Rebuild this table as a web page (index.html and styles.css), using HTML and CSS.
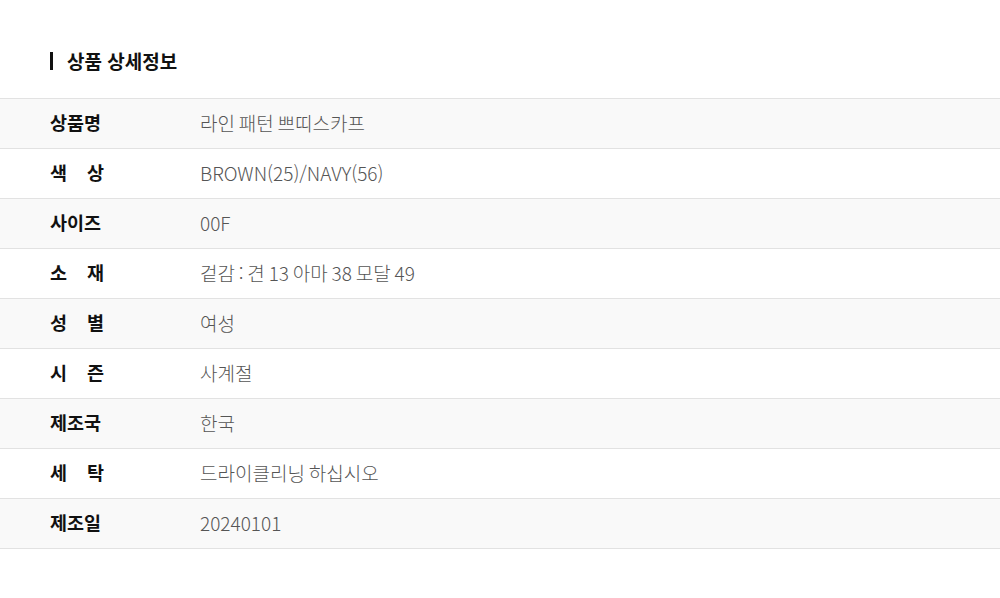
FILE: index.html
```html
<!DOCTYPE html>
<html lang="ko">
<head>
    <meta charset="UTF-8">
    <meta name="viewport" content="width=device-width, initial-scale=1.0">
    <title>상품 상세정보</title>
    <link rel="stylesheet" href="styles.css">
</head>
<body>

    <div class="info">
        <h3 class="info-title">상품 상세정보</h3>
        <table class="info-table">
            <tr>
                <th><span class="label">상품명</span></th>
                <td>라인 패턴 쁘띠스카프</td>
            </tr>
            <tr>
                <th><span class="label"><i>색</i><i>상</i></span></th>
                <td>BROWN(25)/NAVY(56)</td>
            </tr>
            <tr>
                <th><span class="label">사이즈</span></th>
                <td>00F</td>
            </tr>
            <tr>
                <th><span class="label"><i>소</i><i>재</i></span></th>
                <td>겉감 : 견 13 아마 38 모달 49</td>
            </tr>
            <tr>
                <th><span class="label"><i>성</i><i>별</i></span></th>
                <td>여성</td>
            </tr>
            <tr>
                <th><span class="label"><i>시</i><i>즌</i></span></th>
                <td>사계절</td>
            </tr>
            <tr>
                <th><span class="label">제조국</span></th>
                <td>한국</td>
            </tr>
            <tr>
                <th><span class="label"><i>세</i><i>탁</i></span></th>
                <td>드라이클리닝 하십시오</td>
            </tr>
            <tr>
                <th><span class="label">제조일</span></th>
                <td>20240101</td>
            </tr>
        </table>
    </div>

</body>
</html>
```

FILE: styles.css
```css
body {
    margin: 0;
    background: #fff;
    font-family: "Noto Sans CJK KR", "Noto Sans", sans-serif;
    color: #222;
}
.info {
    padding-top: 52px;
}
.info-title {
    margin: 0 0 28px 50px;
    padding-left: 14px;
    border-left: 3px solid #111;
    font-size: 19px;
    font-weight: 700;
    line-height: 18px;
    color: #111;
}
.info-table {
    width: 100%;
    border-collapse: collapse;
}
.info-table tr {
    height: 50px;
    border-top: 1px solid #e2e2e2;
    border-bottom: 1px solid #e2e2e2;
}
.info-table tr:nth-child(odd) {
    background: #f9f9f9;
}
.info-table th {
    width: 150px;
    padding: 0 0 3px 50px;
    text-align: left;
    font-size: 18.5px;
    font-weight: 700;
    color: #111;
    white-space: nowrap;
}
.info-table td {
    padding: 0 0 3px;
    font-size: 19px;
    font-weight: 300;
    color: #555;
    word-spacing: -1.5px;
}
.label {
    display: flex;
    justify-content: space-between;
    width: 54px;
}
.label i {
    font-style: normal;
}
```
